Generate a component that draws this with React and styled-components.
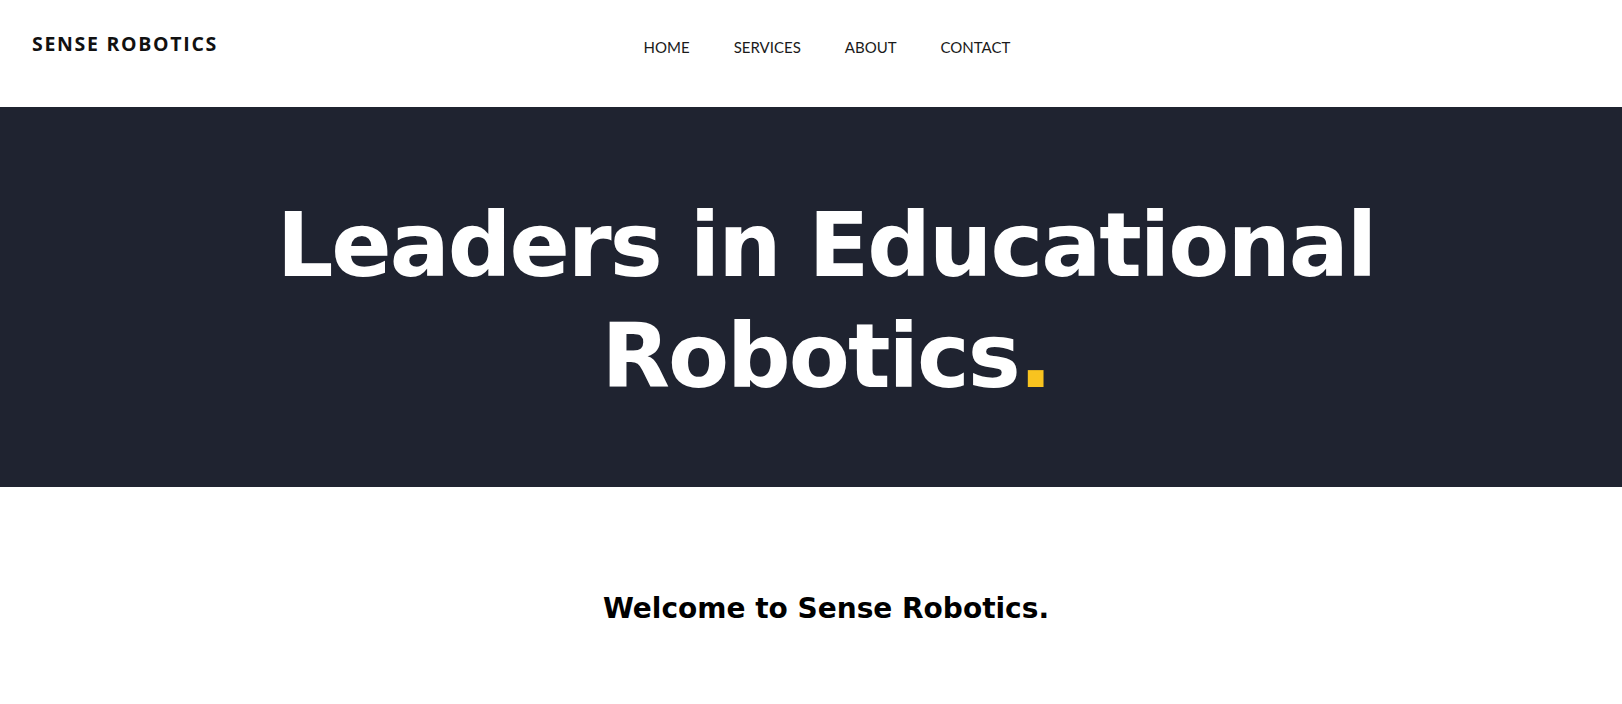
import React from 'react';
import styled, { createGlobalStyle } from 'styled-components';

const GlobalStyle = createGlobalStyle`
    body {
        margin: 0;
        background: #fff;
        font-family: "DejaVu Sans", sans-serif;
    }
`;

const navLinks = ['HOME', 'SERVICES', 'ABOUT', 'CONTACT'];

const App = () => {
    return (
        <>
            <GlobalStyle />
            <Header>
                <Logo>SENSE ROBOTICS</Logo>
                <Nav>
                    {navLinks.map((link) => (
                        <NavLink key={link} href="#">{link}</NavLink>
                    ))}
                </Nav>
            </Header>

            <Hero>
                <HeroTitle>
                    Leaders in Educational<br />
                    Robotics<Dot>.</Dot>
                </HeroTitle>
            </Hero>

            <Welcome>
                <WelcomeTitle>Welcome to Sense Robotics.</WelcomeTitle>
            </Welcome>
        </>
    )
}

const Header = styled.header`
    display: grid;
    grid-template-columns: 1fr auto 1fr;
    align-items: start;
    height: 107px;
    box-sizing: border-box;
    padding: 34px 0 0 32px;
    background: #fff;
`;

const Logo = styled.div`
    font-family: "Open Sans", sans-serif;
    font-weight: 700;
    font-size: 19.5px;
    line-height: 20px;
    letter-spacing: 1.7px;
    color: #111;
`;

const Nav = styled.nav`
    display: flex;
    gap: 44px;
    padding-top: 4px;
`;

const NavLink = styled.a`
    font-family: Lato, sans-serif;
    font-weight: 400;
    font-size: 15px;
    line-height: 18px;
    color: #1a1a1a;
    text-decoration: none;
`;

const Hero = styled.section`
    background-color: #1f2330;
    height: 380px;
    box-sizing: border-box;
    padding: 83px 0 0 30px;
`;

const HeroTitle = styled.h1`
    margin: 0;
    text-align: center;
    font-family: "DejaVu Sans", sans-serif;
    font-weight: 700;
    font-size: 89px;
    line-height: 111px;
    letter-spacing: -2px;
    color: #fff;
`;

const Dot = styled.span`
    color: #f8c31f;
`;

const Welcome = styled.section`
    padding: 105px 0 60px 30px;
`;

const WelcomeTitle = styled.h2`
    margin: 0;
    text-align: center;
    font-family: "DejaVu Sans", sans-serif;
    font-weight: 700;
    font-size: 28px;
    line-height: 33px;
    color: #000;
`;

export default App;
